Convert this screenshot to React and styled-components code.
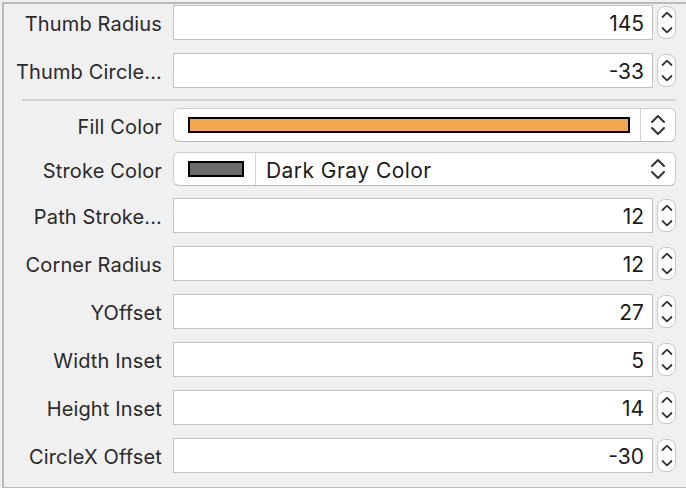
import React from "react";
import styled, { createGlobalStyle } from "styled-components";

const Global = createGlobalStyle`
  html, body { margin: 0; padding: 0; background: #f0f0f0; }
  body { width: 686px; height: 488px; overflow: hidden; font-family: Inter, "Noto Sans", sans-serif; }
`;

const Panel = styled.div`
  margin: 2px 0 0 2px;
  height: 482px;
  border-top: 2px solid #b9b9b9;
  border-left: 2px solid #b9b9b9;
  border-bottom: 2px solid #b9b9b9;
  background: #f0f0f0;
  padding: 1px 10px 0 0;
  display: flex;
  flex-direction: column;
  box-sizing: content-box;
`;

const Row = styled.div`
  display: flex;
  align-items: center;
  height: ${(p) => p.$h}px;
  margin-top: ${(p) => p.$mt}px;
`;

const Label = styled.div`
  width: 158px;
  flex: none;
  text-align: right;
  font-size: 20px;
  letter-spacing: 0.15px;
  color: #2a2a2a;
  white-space: nowrap;
  margin-right: 11px;
  padding-top: 3px;
`;

const Field = styled.div`
  flex: 1;
  height: 100%;
  box-sizing: border-box;
  background: #fff;
  border: 1px solid #c3c3c3;
  display: flex;
  align-items: center;
  justify-content: flex-end;
  padding: 2px 8px 0 0;
  font-size: 21px;
  color: #1b1b1b;
`;

const Stepper = styled.div`
  flex: none;
  width: 19px;
  height: 33px;
  margin-left: 4px;
  box-sizing: border-box;
  background: #fff;
  border: 1px solid #c6c6c6;
  border-radius: 8px;
  display: flex;
  flex-direction: column;
  align-items: center;
  justify-content: center;
  gap: 7px;
`;

const Separator = styled.div`
  height: 2px;
  background: #d3d3d3;
  margin: 11px 0 0 18px;
`;

const Popup = styled.div`
  flex: 1;
  height: 100%;
  box-sizing: border-box;
  background: #fff;
  border: 1px solid #cdcdcd;
  border-bottom-color: #b9b9b9;
  border-radius: 6px;
  display: flex;
  align-items: center;
`;

const SwatchCell = styled.div`
  display: flex;
  align-items: center;
  height: 100%;
  box-sizing: border-box;
  padding: 0 ${(p) => p.$pr}px 0 14px;
  flex: ${(p) => (p.$grow ? 1 : "none")};
  border-right: 1px solid #d2d2d2;
`;

const Swatch = styled.div`
  height: 16px;
  box-sizing: border-box;
  border: 2px solid #000;
  background: ${(p) => p.$color};
  width: ${(p) => (p.$w ? `${p.$w}px` : "100%")};
`;

const PopupText = styled.div`
  flex: 1;
  padding: 2px 0 0 10px;
  font-size: 21px;
  letter-spacing: 0.45px;
  color: #1b1b1b;
`;

const ArrowCell = styled.div`
  width: 34px;
  flex: none;
  display: flex;
  align-items: center;
  justify-content: center;
`;

const UpDown = () => (
  <svg width="16" height="22" viewBox="0 0 16 22">
    <path d="M2 8 L8 2 L14 8" fill="none" stroke="#333" strokeWidth="2" strokeLinecap="round" strokeLinejoin="round" />
    <path d="M2 14 L8 20 L14 14" fill="none" stroke="#333" strokeWidth="2" strokeLinecap="round" strokeLinejoin="round" />
  </svg>
);

const Chevron = ({ down }) => (
  <svg width="12" height="8" viewBox="0 0 12 8">
    <path
      d={down ? "M1.5 2 L6 6.3 L10.5 2" : "M1.5 6 L6 1.7 L10.5 6"}
      fill="none"
      stroke="#333"
      strokeWidth="1.8"
      strokeLinecap="round"
      strokeLinejoin="round"
    />
  </svg>
);

const NumberRow = ({ label, value, mt }) => (
  <Row $h={35} $mt={mt}>
    <Label>{label}</Label>
    <Field>{value}</Field>
    <Stepper>
      <Chevron />
      <Chevron down />
    </Stepper>
  </Row>
);

const top = [
  { label: "Thumb Radius", value: "145" },
  { label: "Thumb Circle...", value: "-33" },
];

const bottom = [
  { label: "Path Stroke...", value: "12" },
  { label: "Corner Radius", value: "12" },
  { label: "YOffset", value: "27" },
  { label: "Width Inset", value: "5" },
  { label: "Height Inset", value: "14" },
  { label: "CircleX Offset", value: "-30" },
];

export default function App() {
  return (
    <>
      <Global />
      <Panel>
        {top.map((r, i) => (
          <NumberRow key={r.label} {...r} mt={i === 0 ? 0 : 13} />
        ))}
        <Separator />
        <Row $h={34} $mt={7}>
          <Label>Fill Color</Label>
          <Popup>
            <SwatchCell $grow $pr={10}>
              <Swatch $color="#f2a84f" />
            </SwatchCell>
            <ArrowCell>
              <UpDown />
            </ArrowCell>
          </Popup>
        </Row>
        <Row $h={34} $mt={10}>
          <Label>Stroke Color</Label>
          <Popup>
            <SwatchCell $pr={11}>
              <Swatch $color="#6b6b6b" $w={56} />
            </SwatchCell>
            <PopupText>Dark Gray Color</PopupText>
            <ArrowCell>
              <UpDown />
            </ArrowCell>
          </Popup>
        </Row>
        {bottom.map((r, i) => (
          <NumberRow key={r.label} {...r} mt={i === 0 ? 12 : 13} />
        ))}
      </Panel>
    </>
  );
}
